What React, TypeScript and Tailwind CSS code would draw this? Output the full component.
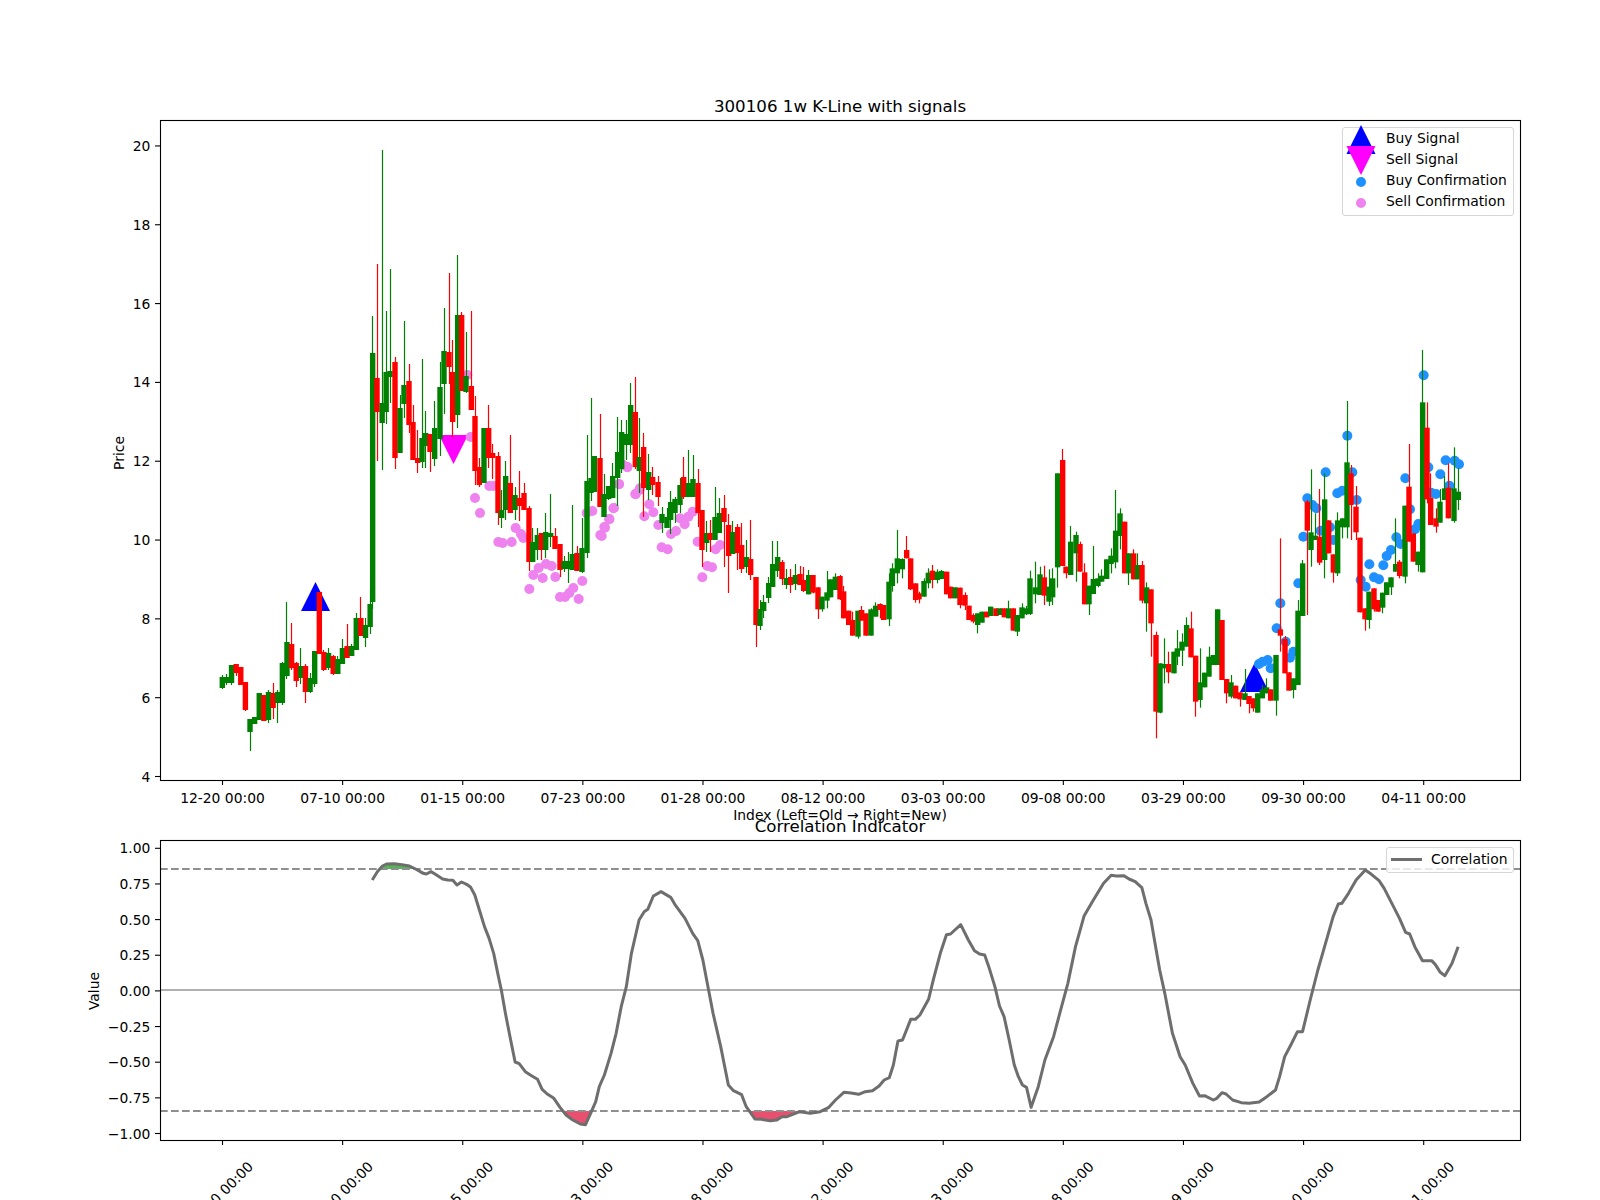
import React from 'react'

type Row = [number, number, number, number, string]
type ZRow = [number, number, number, number, number, string]
type Candle = { x: number; wt: number; t: number; b: number; wb: number; up: boolean }

// first part: wick top, body top, body bottom, wick bottom in page px
const early: Row[] = [
  [675,677,688,689,'g'],[674,677,683,685,'g'],[665,665,683,685,'g'],[664,664,673,676,'r'],[667,667,685,685,'r'],
  [682,682,710,711,'r'],[719,719,732,751,'g'],[717,717,724,724,'g'],[693,693,720,720,'g'],[695,695,721,721,'r'],
  [690,692,720,723,'g'],[683,693,708,719,'r'],[690,692,703,723,'g'],[662,663,703,705,'g'],[602,642,676,679,'g'],
  [623,644,668,670,'r'],[662,663,681,687,'r'],[648,666,678,684,'g'],[664,666,692,703,'r'],[673,678,692,693,'g'],
  [651,651,684,687,'g'],[592,592,654,654,'r'],[650,652,670,671,'r'],[648,653,668,670,'g'],[655,656,674,675,'r'],
  [656,659,674,674,'g'],[639,648,664,664,'g'],[624,646,658,658,'r'],[644,646,656,656,'g'],[613,618,650,650,'g'],
  [597,618,636,636,'r'],[618,625,638,647,'g'],[589,604,627,634,'g'],[316,353,602,609,'g'],[264,378,412,461,'r'],
  [150,403,423,470,'g'],[311,372,412,424,'g'],[269,371,377,403,'g'],[357,362,458,469,'r'],[395,408,453,453,'g'],
  [321,385,404,418,'g'],[364,381,425,433,'r'],[405,422,460,460,'r'],[430,458,463,473,'r'],[359,438,462,468,'g'],
  [411,433,446,468,'g'],[434,434,452,472,'r'],[401,428,459,466,'g'],[362,387,439,456,'g'],[308,351,384,414,'g'],
  [273,352,367,384,'r'],[340,372,422,437,'r'],[255,315,415,428,'g'],[312,315,391,391,'r'],[332,376,392,393,'g'],
  [311,386,410,410,'r'],[396,416,471,485,'r'],[458,467,485,487,'r'],[428,428,483,483,'g'],[405,428,458,468,'r'],
  [444,453,458,479,'r'],[452,456,513,525,'r'],[490,510,518,528,'g'],[461,476,510,520,'g'],[435,483,513,513,'r'],[487,495,510,520,'g'],
  [471,498,506,521,'r'],[483,493,510,510,'r'],[506,508,562,571,'r'],[528,542,562,562,'g'],[528,535,550,560,'g'],
  [533,533,550,560,'r'],[513,532,550,558,'g'],[494,533,537,547,'g'],[528,536,549,549,'r'],[544,544,570,577,'r'],[556,561,569,572,'g'],
  [552,561,569,583,'g'],[505,554,570,570,'g'],[546,553,571,571,'r'],[518,548,572,573,'g'],[435,481,553,558,'g'],
  [398,478,493,501,'g'],[456,456,492,492,'g'],[414,458,507,507,'r'],[474,494,517,517,'g'],[486,486,499,500,'g'],
  [463,476,498,498,'g'],[417,452,478,506,'g'],[420,432,469,473,'g'],[420,434,445,460,'g'],[383,405,445,453,'g'],[377,412,467,469,'r'],
  [418,457,471,493,'g'],[433,447,488,517,'r'],[454,472,490,500,'g'],[467,477,485,495,'r'],[476,482,497,506,'r'],
  [507,514,523,533,'g'],[508,517,528,528,'g'],[491,502,520,534,'g'],[497,499,513,523,'g'],[478,485,505,513,'g'],
  [457,477,497,499,'r'],[450,483,497,497,'g'],[455,479,497,497,'g'],[469,483,513,527,'r'],[510,510,550,567,'r'],
  [521,533,543,552,'g'],[520,533,540,552,'r'],[487,517,540,540,'g'],[498,513,533,533,'g'],[495,508,522,567,'r'],
  [514,525,556,593,'r'],[521,532,554,554,'g'],[524,527,553,570,'r'],[523,545,569,573,'r'],[540,557,567,573,'g'],
  [520,559,575,580,'r'],[577,577,625,647,'r'],[600,609,626,630,'g'],[595,602,611,618,'g'],[577,583,598,603,'g'],
  [541,564,587,587,'g'],[541,557,571,577,'g'],[560,562,579,585,'r'],[569,578,585,589,'g'],[569,577,585,593,'r'],[564,575,584,590,'g'],
  [566,574,585,585,'r'],[567,580,591,592,'r'],
]

// body centres from candle 33 on, at 3x from x = 140 (the first 33 sit on a regular step)
const earlyX = [
  698,711,726.5,738.5,750,765,780,792,807,819,833,846,857,870,884,900,912,927,938,953,965,978,994,1005,1018,1032,
  1046,1058,1074,1085,1097,1111,1125,1138,1152,1167,1178,1192,1204,1217,1232,1245,1260,1272,1285,1297,1311,1326,
  1341,1353,1363,1380,1392,1406,1418,1433,1445,1458,1472,1486,1498,1511,1526,1538,1554,1566,1581,1592,1605,1620,
  1631,1645,1659,1674,1686,1700,1710,1725,1738,1752,1766,1778,1793,1805,1820,1832,1848,1860,1871,1886,1898,1913,
  1926,1939,1952,1966,1980,1991,
]

// middle part, read off the crop starting at (600,360), x and y at 3x
const middle: ZRow[] = [
  [626,630,645,703,703,'g'],[639,645,645,698,700,'r'],[654,682,682,748,777,'r'],[666,710,710,748,755,'g'],
  [681,633,697,722,745,'g'],[692,658,658,712,712,'g'],[706,640,650,690,690,'g'],[720,645,648,718,720,'r'],
  [731,678,694,775,775,'r'],[746,752,752,795,795,'r'],[758,755,780,827,827,'r'],[774,752,752,830,836,'g'],
  [785,738,750,782,782,'r'],[798,760,760,827,827,'r'],[813,745,748,827,827,'g'],[827,727,737,770,770,'g'],
  [840,730,732,750,775,'r'],[851,735,735,780,780,'r'],[867,640,665,778,798,'g'],[877,610,625,678,695,'g'],
  [892,510,595,640,670,'g'],[907,595,597,628,655,'g'],[920,528,570,595,595,'r'],[932,595,595,688,690,'r'],
  [947,670,670,720,728,'r'],[957,695,700,718,730,'r'],[972,655,663,710,710,'g'],[985,625,638,670,685,'g'],
  [997,615,632,660,685,'r'],[1012,628,635,660,670,'g'],[1025,630,633,657,657,'g'],[1040,635,635,703,703,'r'],
  [1052,680,680,715,715,'r'],[1066,682,682,715,715,'g'],[1080,683,683,735,745,'r'],[1095,697,705,737,750,'r'],
  [1107,737,737,780,780,'r'],[1120,760,765,785,790,'r'],[1133,760,760,795,820,'g'],[1146,755,755,788,788,'g'],
  [1160,755,755,772,772,'r'],[1172,740,740,768,768,'g'],[1188,745,745,768,768,'r'],[1200,745,745,765,765,'g'],
  [1213,745,745,772,772,'r'],[1226,722,745,775,775,'g'],[1240,745,745,812,812,'r'],[1252,765,765,815,828,'g'],
  [1266,730,742,775,775,'g'],[1279,738,745,763,765,'g'],[1290,632,655,762,765,'g'],[1306,605,682,703,730,'g'],
  [1320,620,643,705,705,'g'],[1333,617,652,707,735,'r'],[1347,628,680,725,738,'g'],[1358,625,655,712,735,'g'],
  [1373,340,340,622,683,'g'],[1388,267,300,618,618,'r'],[1398,620,620,640,655,'r'],[1412,498,545,645,645,'g'],
  [1428,515,525,580,665,'g'],
]

// last part, read off the crop starting at (1080,340)
const late: ZRow[] = [
  [0,605,612,695,695,'r'],[14,670,697,793,793,'r'],[27,737,737,793,825,'g'],[40,618,717,762,762,'g'],
  [54,700,715,738,742,'g'],[65,688,707,725,725,'g'],[80,658,658,717,717,'g'],[93,625,647,672,700,'g'],
  [107,450,572,667,685,'g'],[120,505,520,588,628,'g'],[134,545,545,700,700,'r'],[146,640,640,700,735,'g'],
  [161,628,640,718,718,'r'],[173,640,675,718,718,'g'],[186,663,675,782,790,'r'],[200,727,742,790,875,'g'],
  [213,748,748,850,950,'r'],[228,875,885,1115,1195,'r'],[240,970,970,1118,1120,'g'],[252,895,972,985,1030,'g'],
  [266,935,972,997,1030,'r'],[282,935,935,1000,1000,'g'],[292,870,925,950,975,'g'],[306,880,905,932,978,'g'],
  [320,832,855,920,920,'g'],[333,815,865,952,952,'r'],[347,947,947,1085,1130,'r'],[360,925,1027,1080,1103,'g'],
  [374,998,998,1042,1042,'g'],[387,920,950,1010,1010,'g'],[400,945,945,975,975,'g'],[413,808,808,975,975,'g'],
  [426,840,840,1020,1020,'r'],[440,1017,1017,1060,1090,'r'],[453,1005,1027,1070,1075,'g'],[467,1037,1037,1075,1075,'r'],
  [480,1057,1057,1078,1100,'r'],[495,987,1060,1080,1080,'g'],[507,1068,1068,1092,1120,'r'],[520,1075,1075,1105,1115,'r'],
  [533,1060,1060,1118,1118,'g'],[547,1035,1048,1075,1075,'g'],[560,1015,1042,1060,1060,'g'],[572,1048,1048,1082,1082,'r'],
  [588,945,945,1082,1127,'g'],[601,595,868,887,935,'r'],[615,888,897,1000,1000,'r'],[627,997,997,1052,1052,'r'],
  [641,1015,1015,1050,1075,'g'],[654,780,812,1035,1035,'g'],[668,660,670,828,828,'g'],[682,480,485,572,825,'r'],
  [693,388,577,630,680,'g'],[706,520,587,600,600,'g'],[719,447,590,668,675,'r'],[734,400,478,660,715,'g'],
  [746,541,541,640,640,'r'],[760,643,643,698,728,'r'],[773,517,541,700,708,'g'],[788,535,535,562,595,'g'],
  [801,183,367,562,595,'g'],[813,375,400,495,600,'r'],[828,438,500,577,600,'r'],[840,593,593,817,817,'r'],
  [855,805,805,838,872,'r'],[867,755,755,840,866,'g'],[882,745,745,808,815,'r'],[894,780,780,815,815,'r'],
  [908,758,758,803,820,'g'],[920,727,727,765,765,'g'],[933,712,712,742,765,'g'],[947,535,672,695,695,'g'],
  [959,660,665,708,715,'r'],[975,497,497,710,730,'g'],[987,312,440,605,605,'r'],[1000,580,580,665,665,'r'],
  [1014,635,635,675,695,'g'],[1028,30,187,697,697,'g'],[1041,187,263,478,490,'r'],[1052,400,473,555,555,'r'],
  [1068,505,535,560,578,'r'],[1080,447,485,548,548,'g'],[1094,408,445,480,480,'g'],[1105,370,443,535,535,'r'],
  [1122,322,445,543,548,'g'],[1135,385,455,480,510,'g'],
]

const fromCrop = (rows: ZRow[], ox: number, oy: number): Candle[] =>
  rows.map(([zx, wt, t, b, wb, c]) => ({
    x: ox + zx / 3,
    wt: oy + wt / 3,
    t: oy + t / 3,
    b: oy + b / 3,
    wb: oy + wb / 3,
    up: c === 'g',
  }))

const earlyCandleX = (i: number) => (i < 33 ? 222.3 + 4.62 * i : 140 + earlyX[i - 33] / 3)

const candles: Candle[] = [
  ...early.map(([wt, t, b, wb, c], i) => ({ x: earlyCandleX(i), wt, t, b, wb, up: c === 'g' })),
  ...fromCrop(middle, 600, 360),
  ...fromCrop(late, 1080, 340),
]

const sellA: [number, number][] = [
  [968,385],[982,375],[992,437],[1048,486],[1060,486],[1005,498],[1020,513],[1075,542],[1088,543],[1115,542],
  [1127,528],[1143,534],[1150,538],[1168,589],[1180,575],[1196,568],[1208,578],[1218,564],[1235,566],[1246,577],
  [1260,597],[1275,597],[1288,593],[1300,588],[1316,599],[1327,581],[1340,513],[1357,511],[1381,535],[1393,527],
  [1408,519],[1422,508],[1437,484],[1462,467],[1486,494],[1498,490],
]
const sellB: [number, number][] = [
  [5,528],[15,503],[28,478],[40,445],[57,373],[82,322],[70,315],[107,403],[120,385],[133,469],[148,433],[160,457],
  [175,495],[213,522],[228,513],[240,475],[254,493],[265,470],[278,455],[293,545],[185,562],[203,568],[307,652],
  [322,618],[336,622],[347,568],[360,555],
]
const buyDots: [number, number][] = [
  [601,790],[590,865],[617,905],[640,935],[630,953],[537,972],[548,965],[563,960],[572,985],[655,730],[670,590],
  [682,475],[697,495],[709,505],[722,572],[750,562],[760,600],[737,397],[772,460],[787,452],[802,287],[817,397],
  [830,480],[842,720],[857,740],[868,673],[882,712],[897,718],[910,676],[920,648],[933,630],[949,592],[962,612],
  [976,415],[990,508],[1005,568],[1015,552],[1031,106],[1045,382],[1053,458],[1068,462],[1081,403],[1097,361],
  [1108,437],[1124,362],[1137,373],
]

const corrLeft: [number, number][] = [
  [612,330],[622,305],[632,288],[640,282],[655,281],[670,284],[685,288],[697,297],[712,310],[718,312],[727,305],
  [735,312],[750,327],[760,330],[770,331],[778,345],[787,336],[797,343],[805,352],[813,375],[822,420],[832,470],
  [841,505],[850,550],[858,610],[865,660],[873,730],[882,800],[892,876],[900,881],[912,905],[925,918],[936,928],
  [945,958],[955,972],[968,985],[980,1012],[992,1035],[1005,1050],[1020,1062],[1030,1064],[1040,1030],[1050,995],
  [1057,950],[1067,915],[1080,850],[1090,790],[1100,710],[1110,650],[1120,550],[1135,450],[1145,425],[1152,418],
  [1163,378],[1178,365],[1197,382],[1205,403],[1225,445],[1240,490],[1250,512],[1260,570],[1270,650],[1280,730],
  [1295,830],[1310,945],[1320,962],[1336,974],[1345,1010],[1362,1047],[1375,1048],[1392,1052],[1405,1050],
  [1415,1040],[1425,1040],[1450,1025],[1470,1030],[1490,1025],[1507,1012],[1520,990],
]
const corrRight: [number, number][] = [
  [86,967],[100,969],[115,973],[128,965],[142,962],[155,948],[165,930],[175,923],[183,885],[192,813],[201,810],
  [217,748],[226,748],[235,735],[252,688],[262,625],[275,550],[287,494],[295,492],[315,464],[330,510],[342,542],
  [352,552],[362,555],[370,590],[382,650],[391,708],[400,740],[410,810],[420,885],[428,920],[436,945],[444,952],
  [453,1012],[467,950],[480,870],[497,800],[510,725],[525,640],[540,530],[557,437],[575,390],[595,340],[610,316],
  [620,318],[635,317],[645,327],[657,335],[670,353],[678,400],[688,450],[697,530],[705,600],[715,670],[730,790],
  [745,860],[755,885],[770,940],[783,978],[793,977],[810,990],[817,985],[827,968],[835,972],[848,990],[865,998],
  [880,1000],[900,996],[915,980],[932,960],[940,920],[950,860],[962,825],[975,785],[985,785],[1000,690],[1015,600],
  [1030,520],[1045,440],[1055,402],[1062,400],[1075,370],[1090,330],[1108,300],[1120,313],[1135,332],[1145,355],
  [1160,400],[1175,445],[1187,487],[1195,492],[1205,530],[1220,572],[1238,572],[1245,583],[1255,607],[1264,617],
  [1278,580],[1290,530],
]

// the crops of the lower panel were 1.96x wide and 3x high
const corrPt = (ox: number) => ([x, y]: [number, number]) => `${ox + x / 1.96},${770 + y / 3}`
const corrLine = [...corrLeft.map(corrPt(60)), ...corrRight.map(corrPt(800))].join(' ')

const fillGreen: [number, number][] = [[626,297],[632,288],[640,282],[655,281],[670,284],[685,288],[697,297]]
const fillRedA: [number, number][] = [[985,1023],[992,1035],[1005,1050],[1020,1062],[1030,1064],[1040,1030],[1042,1023]]
const fillRedB: [number, number][] = [
  [1350,1023],[1362,1047],[1375,1048],[1392,1052],[1405,1050],[1415,1040],[1425,1040],[1450,1025],[1455,1023],
]
const polyOf = (pts: [number, number][]) => pts.map(corrPt(60)).join(' ')

const tickLabels = ['12-20','07-10','01-15','07-23','01-28','08-12','03-03','09-08','03-29','09-30','04-11']
const tickX = tickLabels.map((_, i) => 222.5 + 120.12 * i)

const priceTicks = [4, 6, 8, 10, 12, 14, 16, 18, 20]
const priceY = (v: number) => 776.5 - (v - 4) * 39.41
const corrTicks = ['1.00','0.75','0.50','0.25','0.00','−0.25','−0.50','−0.75','−1.00']

const triangle = (cx: number, top: number, bottom: number) =>
  `${cx},${top} ${cx + 14.5},${bottom} ${cx - 14.5},${bottom}`

function PricePanel() {
  return (
    <div className="relative w-[1360px] h-[660px]">
      <svg viewBox="160 120 1360 660" className="w-[1360px] h-[660px] overflow-visible">
        <text x={840} y={112} textAnchor="middle" className="text-[16.67px]">300106 1w K-Line with signals</text>
        <polygon points={triangle(315.5, 582, 611)} fill="#0000ff" />
        <polygon points={`439,435 468,435 453.5,464`} fill="#ff00ff" />
        <polygon points={triangle(1254.5, 663, 692)} fill="#0000ff" />
        {sellA.map(([x, y], i) => (
          <circle key={i} cx={140 + x / 3} cy={y} r={5} fill="#ee82ee" />
        ))}
        {sellB.map(([x, y], i) => (
          <circle key={i} cx={600 + x / 3} cy={360 + y / 3} r={5} fill="#ee82ee" />
        ))}
        {buyDots.map(([x, y], i) => (
          <circle key={i} cx={1080 + x / 3} cy={340 + y / 3} r={5} fill="#1e90ff" />
        ))}
        {candles.map((c, i) => (
          <g key={i} fill={c.up ? '#008000' : '#ff0000'} stroke={c.up ? '#008000' : '#ff0000'}>
            <line x1={Math.floor(c.x) + 0.5} x2={Math.floor(c.x) + 0.5} y1={c.wt} y2={c.wb} strokeWidth={1.2} />
            <rect x={c.x - 2.7} y={c.t} width={5.4} height={Math.max(c.b - c.t, 1)} stroke="none" />
          </g>
        ))}
        <rect x={160.5} y={120.5} width={1360} height={660} fill="none" stroke="#000" strokeWidth={1.1} />
        {priceTicks.map((v) => (
          <g key={v}>
            <line x1={155} x2={160} y1={priceY(v)} y2={priceY(v)} stroke="#000" strokeWidth={1.1} />
            <text x={150.3} y={priceY(v)} textAnchor="end" dominantBaseline="central">{v}</text>
          </g>
        ))}
        {tickLabels.map((l, i) => (
          <g key={l}>
            <line x1={tickX[i]} x2={tickX[i]} y1={780} y2={785} stroke="#000" strokeWidth={1.1} />
            <text x={tickX[i]} y={803} textAnchor="middle">{l} 00:00</text>
          </g>
        ))}
        <text x={840} y={820} textAnchor="middle">Index (Left=Old → Right=New)</text>
        <text transform="translate(124 453) rotate(-90)" textAnchor="middle">Price</text>
      </svg>
      <div className="absolute left-[1182px] top-[7px] w-[172px] h-[89px] rounded-[3px] border border-[#d6d6d6] bg-white/80 text-[13.89px] leading-[21px] pl-[43px]">
        <p>Buy Signal</p>
        <p>Sell Signal</p>
        <p className="whitespace-nowrap">Buy Confirmation</p>
        <p className="whitespace-nowrap">Sell Confirmation</p>
        <svg viewBox="0 0 30 60" className="absolute left-[3px] top-[-3px] w-[30px] h-[60px] overflow-visible">
          <polygon points="15,0 29.5,29 0.5,29" fill="#0000ff" />
          <polygon points="0.5,21 29.5,21 15,50" fill="#ff00ff" />
          <circle cx={15} cy={57} r={5} fill="#1e90ff" />
          <circle cx={15} cy={78} r={5} fill="#ee82ee" />
        </svg>
      </div>
    </div>
  )
}

function CorrPanel() {
  return (
    <div className="relative w-[1360px] h-[300px]">
      <svg viewBox="160 840 1360 300" className="w-[1360px] h-[300px] overflow-visible">
        <text x={840} y={832} textAnchor="middle" className="text-[16.67px]">Correlation Indicator</text>
        <line x1={160} x2={1520} y1={990} y2={990} stroke="#b0b0b0" strokeWidth={2.1} />
        <polygon points={polyOf(fillGreen)} fill="#56b556" />
        <polygon points={polyOf(fillRedA)} fill="#e9506f" />
        <polygon points={polyOf(fillRedB)} fill="#e9506f" />
        <line x1={160} x2={1520} y1={869} y2={869} stroke="#8f8f8f" strokeWidth={2.1} strokeDasharray="7.7 3.3" />
        <line x1={160} x2={1520} y1={1111} y2={1111} stroke="#8f8f8f" strokeWidth={2.1} strokeDasharray="7.7 3.3" />
        <polyline points={corrLine} fill="none" stroke="#6e6e6e" strokeWidth={3} strokeLinejoin="round" />
        <rect x={160.5} y={840.5} width={1360} height={300} fill="none" stroke="#000" strokeWidth={1.1} />
        {corrTicks.map((l, i) => {
          const y = 848.3 + i * 35.65
          return (
            <g key={l}>
              <line x1={155} x2={160} y1={y} y2={y} stroke="#000" strokeWidth={1.1} />
              <text x={150.3} y={y} textAnchor="end" dominantBaseline="central">{l}</text>
            </g>
          )
        })}
        {tickLabels.map((l, i) => (
          <g key={l}>
            <line x1={tickX[i]} x2={tickX[i]} y1={1140} y2={1145} stroke="#000" strokeWidth={1.1} />
            <text
              textAnchor="middle"
              dominantBaseline="central"
              transform={`translate(${tickX[i] - 2} 1194) rotate(-45)`}
            >
              {l} 00:00
            </text>
          </g>
        ))}
        <text transform="translate(99 991) rotate(-90)" textAnchor="middle">Value</text>
      </svg>
      <div className="absolute left-[1226px] top-[7px] w-[128px] h-[26px] rounded-[3px] border border-[#d6d6d6] bg-white/80 text-[13.89px] leading-[23px] pl-[44px]">
        Correlation
        <div className="absolute left-[4px] top-[10px] w-[31px] h-[3px] bg-[#6e6e6e]" />
      </div>
    </div>
  )
}

export default function App() {
  return (
    <div className="w-[1600px] h-[1200px] overflow-hidden bg-white text-black text-[13.89px] font-['DejaVu_Sans',sans-serif] pt-[120px] pl-[160px] flex flex-col gap-[60px]">
      <PricePanel />
      <CorrPanel />
    </div>
  )
}
